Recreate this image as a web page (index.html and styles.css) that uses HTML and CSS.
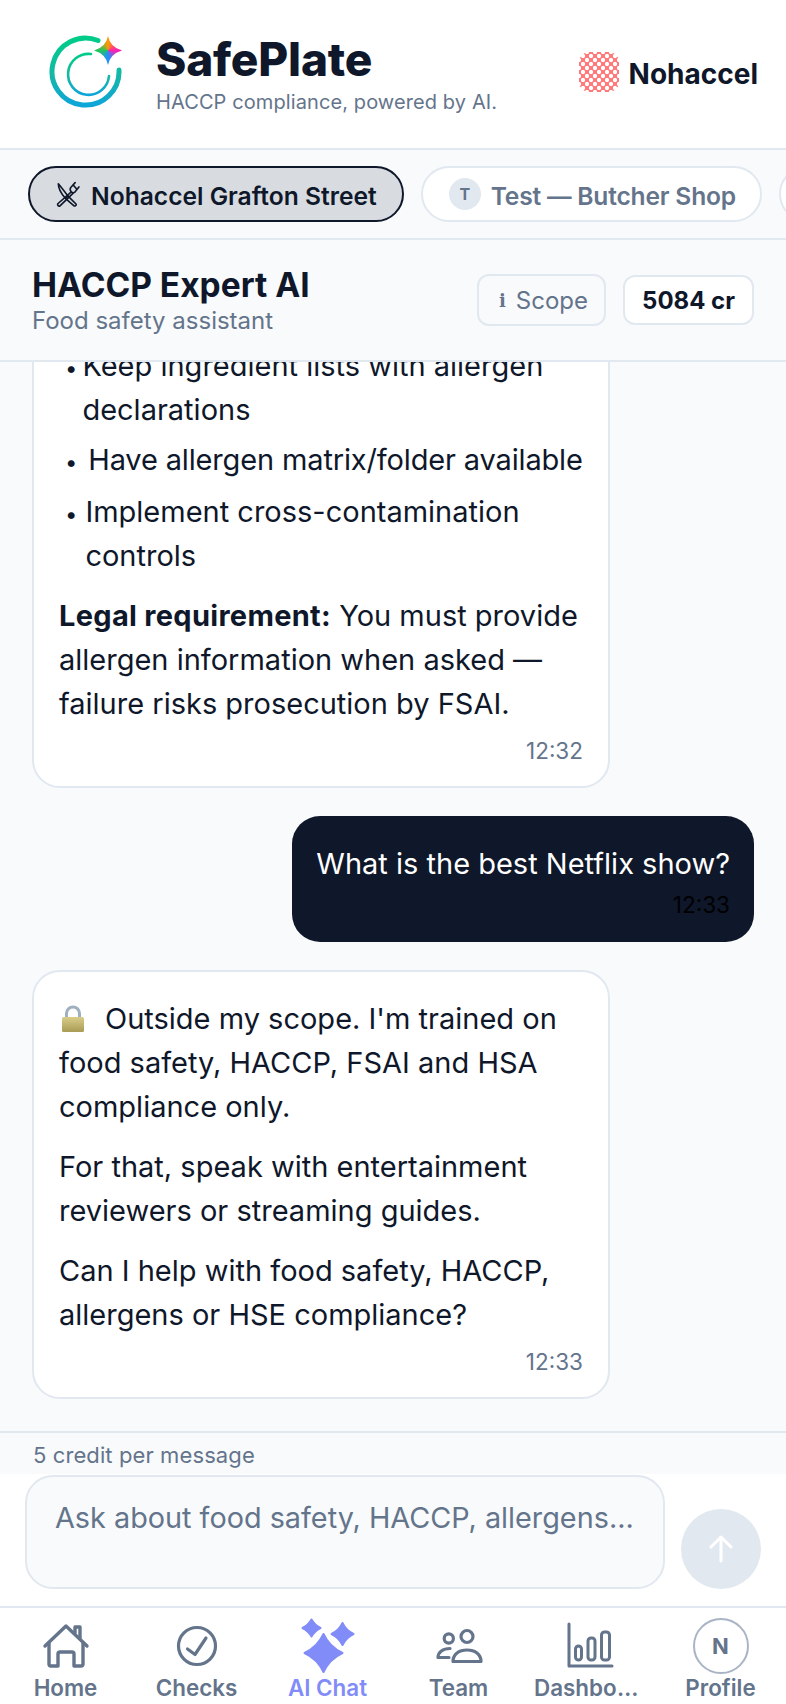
FILE: index.html
```html
<!DOCTYPE html>
<html lang="en">
<head>
    <meta charset="UTF-8">
    <meta name="viewport" content="width=device-width, initial-scale=1.0">
    <title>SafePlate</title>
    <link rel="stylesheet" href="styles.css">
</head>
<body>
<div class="app">
    <header class="top-bar">
        <div class="brand">
            <div class="brand-mark">
                <svg viewBox="0 0 80 80" width="80" height="80">
                    <defs>
                        <linearGradient id="ring" x1="0" y1="0" x2="0" y2="1">
                            <stop offset="0" stop-color="#00cc88"/>
                            <stop offset=".55" stop-color="#14b8a6"/>
                            <stop offset="1" stop-color="#0ea5d9"/>
                        </linearGradient>
                    </defs>
                    <path d="M50 8.500A33.500 33.500 0 1 0 71 38" fill="none" stroke="url(#ring)" stroke-width="5" stroke-linecap="round"/>
                    <path d="M43 22A20.500 20.500 0 1 0 61 44" fill="none" stroke="url(#ring)" stroke-width="2.600" stroke-linecap="round"/>
                </svg>
                <span class="brand-spark"></span>
            </div>
            <div class="brand-text">
                <div class="brand-name">SafePlate</div>
                <div class="brand-tagline">HACCP compliance, powered by AI.</div>
            </div>
        </div>
        <div class="org">
            <span class="org-badge"></span>
            <span class="org-name">Nohaccel</span>
        </div>
    </header>

    <nav class="site-tabs">
        <div class="site-tab site-tab-active">
            <svg class="site-icon" viewBox="0 0 24 24" width="26" height="26" fill="none" stroke="#0f172a" stroke-width="1.500" stroke-linecap="round" stroke-linejoin="round">
                <path d="M4 2.500C7 6 10 10 13 14L10.500 16C7 12 4 7 4 2.500Z"/>
                <path d="M13 14L20.500 21.500A1.500 1.500 0 0 1 18.500 23L10.500 16"/>
                <path d="M19.500 1.500L15.500 6C14.500 7.500 15 9 16 10C17 11 18.500 11 19.500 10L23 5.500M17.500 3.500L20.500 7M16 10L3.500 21A1.500 1.500 0 0 0 5.500 23L18 11"/>
            </svg>
            <span class="site-name">Nohaccel Grafton Street</span>
        </div>
        <div class="site-tab">
            <span class="site-avatar">T</span>
            <span class="site-name">Test — Butcher Shop</span>
        </div>
        <div class="site-tab">
            <span class="site-avatar"></span>
        </div>
    </nav>

    <section class="chat-head">
        <div class="chat-title-wrap">
            <h1 class="chat-title">HACCP Expert AI</h1>
            <div class="chat-sub">Food safety assistant</div>
        </div>
        <div class="scope-btn"><span class="scope-i">i</span>Scope</div>
        <div class="credit-chip">5084 cr</div>
    </section>

    <main class="messages">
        <div class="bubble bubble-ai">
            <ul class="bullets">
                <li><span class="dot">•</span><span>Keep ingredient lists with allergen declarations</span></li>
                <li class="bullet-wide"><span class="dot">•</span><span>Have allergen matrix/folder available</span></li>
                <li class="bullet-mid"><span class="dot">•</span><span>Implement cross-contamination controls</span></li>
            </ul>
            <p><strong>Legal requirement:</strong> You must provide allergen information when asked — failure risks prosecution by FSAI.</p>
            <div class="time">12:32</div>
        </div>

        <div class="bubble bubble-user">
            <p>What is the best Netflix show?</p>
            <div class="time">12:33</div>
        </div>

        <div class="bubble bubble-ai">
            <p>
                <svg class="lock" viewBox="0 0 24 28" width="24" height="28">
                    <defs>
                        <linearGradient id="lock-body" x1="0" y1="0" x2="0" y2="1">
                            <stop offset="0" stop-color="#d9cd8a"/>
                            <stop offset="1" stop-color="#a89b55"/>
                        </linearGradient>
                    </defs>
                    <path d="M5.500 13V8.500a6.500 6.500 0 0 1 13 0V13" fill="none" stroke="#9fb0c0" stroke-width="3"/>
                    <rect x="1" y="12" width="22" height="15" rx="1.500" fill="url(#lock-body)"/>
                </svg>Outside my scope. I'm trained on food safety, HACCP, FSAI and HSA compliance only.
            </p>
            <p>For that, speak with entertainment reviewers or streaming guides.</p>
            <p>Can I help with food safety, HACCP, allergens or HSE compliance?</p>
            <div class="time">12:33</div>
        </div>
    </main>

    <div class="credit-note">5 credit per message</div>

    <div class="composer">
        <div class="composer-input">Ask about food safety, HACCP, allergens...</div>
        <button class="send-btn" type="button">
            <svg viewBox="0 0 24 28" width="24" height="28" fill="none" stroke="#fff" stroke-width="3" stroke-linecap="round" stroke-linejoin="round">
                <path d="M12 26V2M2 12L12 2L22 12"/>
            </svg>
        </button>
    </div>

    <nav class="tab-bar">
        <div class="tab-item">
            <span class="tab-icon">
                <svg viewBox="0 0 48 48" width="48" height="48" fill="none" stroke="#64748b" stroke-width="3.400" stroke-linecap="round" stroke-linejoin="round">
                    <path d="M3 24L24 4L45 24"/>
                    <path d="M33 11V5H38V16"/>
                    <path d="M7 21V42A2 2 0 0 0 9 44H16V32A2 2 0 0 1 18 30H30A2 2 0 0 1 32 32V44H39A2 2 0 0 0 41 42V21"/>
                </svg>
            </span>
            <span class="tab-label">Home</span>
        </div>
        <div class="tab-item">
            <span class="tab-icon">
                <svg viewBox="0 0 48 48" width="48" height="48" fill="none" stroke="#64748b" stroke-width="3.200" stroke-linecap="round" stroke-linejoin="round">
                    <circle cx="24" cy="24" r="18.500"/>
                    <path d="M14.500 27L22 32.500L33 16"/>
                </svg>
            </span>
            <span class="tab-label">Checks</span>
        </div>
        <div class="tab-item tab-item-active">
            <span class="tab-icon">
                <svg viewBox="0 0 56 56" width="56" height="56" fill="#818cf8" stroke="#818cf8" stroke-width="2" stroke-linejoin="round">
                    <path d="M23.500 16Q29.500 29 42.500 35Q29.500 41 23.500 54Q17.500 41 4.500 35Q17.500 29 23.500 16Z"/>
                    <path d="M11.500 1.500Q14.500 7 20.500 10Q14.500 13 11.500 18.500Q8.500 13 2.500 10Q8.500 7 11.500 1.500Z"/>
                    <path d="M42.500 5Q46 12.500 53.500 16Q46 19.500 42.500 27Q39 19.500 31.500 16Q39 12.500 42.500 5Z"/>
                </svg>
            </span>
            <span class="tab-label">AI Chat</span>
        </div>
        <div class="tab-item">
            <span class="tab-icon">
                <svg viewBox="0 0 48 48" width="48" height="48" fill="none" stroke="#64748b" stroke-width="3.200" stroke-linecap="round" stroke-linejoin="round">
                    <circle cx="32" cy="14.500" r="6"/>
                    <circle cx="13.800" cy="16.500" r="4.600"/>
                    <path d="M18 39.500H46C46 32 40 28 32 28C24 28 18 32 18 39.500Z"/>
                    <path d="M15 26.500C8 26.500 3 30 3 35.500H14"/>
                </svg>
            </span>
            <span class="tab-label">Team</span>
        </div>
        <div class="tab-item">
            <span class="tab-icon">
                <svg viewBox="0 0 48 48" width="48" height="48" fill="none" stroke="#64748b" stroke-width="3" stroke-linecap="round" stroke-linejoin="round">
                    <path d="M3 2V44H46"/>
                    <rect x="9.500" y="24" width="6" height="14" rx="3"/>
                    <rect x="22" y="16" width="7" height="22" rx="3"/>
                    <rect x="35.500" y="10" width="8" height="28" rx="3"/>
                </svg>
            </span>
            <span class="tab-label tab-label-cut">Dashboard</span>
        </div>
        <div class="tab-item">
            <span class="tab-icon">
                <span class="profile-circle">N</span>
            </span>
            <span class="tab-label">Profile</span>
        </div>
    </nav>
</div>
</body>
</html>
```

FILE: styles.css
```css
* {
    box-sizing: border-box;
}

body {
    margin: 0;
    background: #f8fafc;
    color: #0f172a;
    font-family: Inter, "Liberation Sans", sans-serif;
}

.app {
    display: flex;
    flex-direction: column;
    height: 1704px;
    overflow: hidden;
}

/* top bar */
.top-bar {
    display: flex;
    align-items: center;
    justify-content: space-between;
    flex: none;
    height: 150px;
    padding: 0 28px 4px 48px;
    background: #fff;
    border-bottom: 2px solid #e2e8f0;
}

.brand {
    display: flex;
    align-items: center;
    gap: 28px;
}

.brand-mark {
    position: relative;
    flex: none;
    width: 80px;
    height: 80px;
}

.brand-mark svg {
    display: block;
}

/* the four colours meet in the middle of the star, so a conic gradient clipped to it */
.brand-spark {
    position: absolute;
    top: 4px;
    left: 46px;
    width: 28px;
    height: 29px;
    background: conic-gradient(#ff9900, #ff1fb0 90deg, #1e90ff 180deg, #22c55e 270deg, #ff9900);
    clip-path: path("M14 0Q16 11 28 14.500Q16 18 14 29Q12 18 0 14.500Q12 11 14 0Z");
}

.brand-text {
    padding-top: 4px;
}

.brand-name {
    font-size: 46px;
    line-height: 50px;
    font-weight: 800;
    letter-spacing: -.2px;
}

.brand-tagline {
    margin-top: 5px;
    font-size: 20px;
    line-height: 26px;
    color: #64748b;
    letter-spacing: .1px;
}

.org {
    display: flex;
    align-items: center;
    gap: 10px;
}

.org-badge {
    width: 40px;
    height: 40px;
    border-radius: 10px;
    background-color: #ff7a7a;
    background-image:
        radial-gradient(circle, #fff 0 1.800px, transparent 2.400px),
        radial-gradient(circle, #fff 0 1.800px, transparent 2.400px);
    background-size: 8px 8px;
    background-position: 0 0, 4px 4px;
}

.org-name {
    margin-top: 4px;
    font-size: 28px;
    font-weight: 700;
}

/* site pills */
.site-tabs {
    display: flex;
    align-items: center;
    gap: 17px;
    flex: none;
    height: 90px;
    padding: 0 0 0 28px;
    overflow: hidden;
    border-bottom: 2px solid #e2e8f0;
}

.site-tab {
    display: flex;
    align-items: center;
    flex: none;
    gap: 10px;
    height: 56px;
    padding: 0 24px 0 26px;
    border: 2px solid #e2e8f0;
    border-radius: 28px;
    background: #fff;
    font-size: 24.600px;
    font-weight: 600;
    color: #64748b;
    letter-spacing: -.2px;
    white-space: nowrap;
}

.site-tab-active {
    gap: 11px;
    padding: 0 25px 0 24px;
    background: #d8dce0;
    border-color: #0f172a;
    color: #0f172a;
    letter-spacing: 0;
}

.site-name {
    margin-top: 3px;
}

.site-icon {
    flex: none;
}

.site-avatar {
    display: flex;
    align-items: center;
    justify-content: center;
    width: 32px;
    height: 32px;
    border-radius: 50%;
    background: #e2e8f0;
    font-size: 16px;
    font-weight: 700;
}

/* chat heading */
.chat-head {
    display: flex;
    align-items: center;
    gap: 17px;
    flex: none;
    height: 122px;
    padding: 0 32px;
    border-bottom: 2px solid #e2e8f0;
}

.chat-title-wrap {
    flex: 1;
}

.chat-title {
    margin: 1px 0 0;
    font-size: 33.500px;
    line-height: 40px;
    font-weight: 700;
}

.chat-sub {
    margin-top: 1px;
    font-size: 24px;
    line-height: 30px;
    color: #64748b;
}

.scope-btn,
.credit-chip {
    display: flex;
    align-items: center;
    height: 50px;
    border: 2px solid #e2e8f0;
    border-radius: 12px;
    font-size: 24px;
}

.scope-btn {
    height: 52px;
    padding: 0 16px 0 20px;
    color: #64748b;
}

.scope-i {
    margin-right: 10px;
    font-family: "DejaVu Serif", serif;
    font-size: 18px;
    font-weight: 700;
}

.credit-chip {
    padding: 0 17px;
    background: #fff;
    font-weight: 700;
}

/* messages */
.messages {
    display: flex;
    flex-direction: column;
    justify-content: flex-end;
    gap: 28px;
    flex: 1;
    min-height: 0;
    padding: 0 32px 32px;
    overflow: hidden;
}

.bubble {
    flex: none;
    border-radius: 28px;
    font-size: 29px;
    line-height: 44px;
}

.bubble p {
    margin: 0 0 16px;
}

.bubble p:last-of-type {
    margin-bottom: 10px;
}

.bubble strong {
    letter-spacing: .3px;
}

.bubble-ai {
    width: 578px;
    padding: 25px 20px 20px 25px;
    background: #fff;
    border: 2px solid #e2e8f0;
}

.bubble-ai .time {
    margin-right: 5px;
}

.bubble-user {
    align-self: flex-end;
    padding: 26px 24px 22px;
    background: #0f172a;
    color: #fff;
}

.bubble-user p:last-of-type {
    margin-bottom: 4px;
}

.bubble-user .time {
    color: #000;
}

.time {
    font-size: 22.500px;
    line-height: 30px;
    text-align: right;
    color: #64748b;
}

.bullets {
    margin: 0 0 16px;
    padding: 0 0 0 6px;
    list-style: none;
}

.bullets li {
    display: flex;
    align-items: baseline;
    gap: 5px;
    margin-bottom: 6px;
}

.bullets .bullet-wide {
    gap: 11px;
    letter-spacing: -.15px;
    white-space: nowrap;
}

.bullets .bullet-mid {
    gap: 8px;
}

.dot {
    flex: none;
    font-size: 22px;
}

.lock {
    margin: 0 20px 0 2px;
    vertical-align: -4px;
}

/* bottom of the chat */
.credit-note {
    flex: none;
    height: 43px;
    padding: 8px 33px 0;
    border-top: 2px solid #e2e8f0;
    font-size: 22px;
    line-height: 28px;
    color: #64748b;
    letter-spacing: .1px;
}

.composer {
    display: flex;
    align-items: flex-end;
    gap: 16px;
    flex: none;
    height: 134px;
    padding: 1px 25px 17px;
    background: #fff;
    border-bottom: 2px solid #e2e8f0;
}

.composer-input {
    flex: 1;
    height: 114px;
    padding: 22px 28px;
    border: 2px solid #e2e8f0;
    border-radius: 28px;
    background: #f8fafc;
    font-size: 28.800px;
    line-height: 38px;
    color: #64748b;
    white-space: nowrap;
    overflow: hidden;
}

.send-btn {
    display: flex;
    align-items: center;
    justify-content: center;
    flex: none;
    width: 80px;
    height: 80px;
    padding: 0;
    border: 0;
    border-radius: 50%;
    background: #e2e8f0;
}

/* tab bar */
.tab-bar {
    display: grid;
    grid-template-columns: repeat(6, 131px);
    flex: none;
    height: 96px;
    padding-top: 10px;
    background: #fff;
}

.tab-item {
    display: flex;
    flex-direction: column;
    align-items: center;
    min-width: 0;
    color: #64748b;
}

.tab-item-active {
    color: #818cf8;
}

.tab-icon {
    display: flex;
    align-items: center;
    justify-content: center;
    height: 56px;
}

.tab-label {
    font-size: 22.400px;
    line-height: 28px;
    font-weight: 600;
}

.tab-label-cut {
    display: block;
    align-self: flex-start;
    width: 110px;
    margin-left: 10px;
    overflow: hidden;
    white-space: nowrap;
    text-overflow: ellipsis;
}

.profile-circle {
    display: flex;
    align-items: center;
    justify-content: center;
    width: 56px;
    height: 56px;
    border: 2px solid #a9b4c5;
    border-radius: 50%;
    font-size: 22px;
    font-weight: 700;
}
```
